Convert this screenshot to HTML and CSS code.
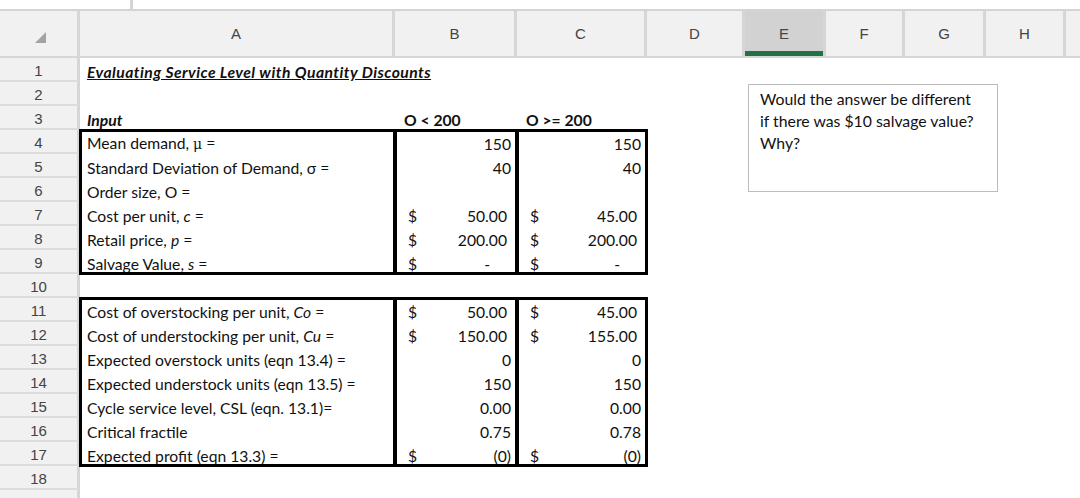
FILE: index.html
```html
<!DOCTYPE html>
<html>
<head>
<meta charset="utf-8">
<link rel="stylesheet" href="styles.css">
</head>
<body>
<div class="topbar"><div class="namebox"></div><div class="formula"></div></div>
<div class="sheet">
  <div class="cells">
    <div class="corner"><svg width="11" height="11" viewBox="0 0 11 11"><polygon points="0,11 11,11 11,0" fill="#a3a3a3"/></svg></div>
    <div class="colh">A</div><div class="colh">B</div><div class="colh">C</div><div class="colh">D</div><div class="colh sel">E</div><div class="colh">F</div><div class="colh">G</div><div class="colh">H</div><div class="colh last"></div>

    <div class="rowh">1</div><div class="c title"><span>Evaluating Service Level with Quantity Discounts</span></div><div class="c"></div><div class="c"></div><div class="rest"></div>
    <div class="rowh">2</div><div class="c"></div><div class="c"></div><div class="c"></div><div class="rest"></div>
    <div class="rowh">3</div><div class="c bi"><span>Input</span></div><div class="c b hd"><span>O &lt; 200</span></div><div class="c b hd"><span>O &gt;= 200</span></div><div class="rest"></div>
    <div class="rowh">4</div><div class="c"><span>Mean demand, <span class="sym">μ</span> =</span></div><div class="c num"><span>150</span></div><div class="c num"><span>150</span></div><div class="rest"></div>
    <div class="rowh">5</div><div class="c"><span>Standard Deviation of Demand, σ =</span></div><div class="c num"><span>40</span></div><div class="c num"><span>40</span></div><div class="rest"></div>
    <div class="rowh">6</div><div class="c"><span>Order size, O =</span></div><div class="c"></div><div class="c"></div><div class="rest"></div>
    <div class="rowh">7</div><div class="c"><span>Cost per unit, <i>c</i> =</span></div><div class="c acc"><span>$</span><span>50.00</span></div><div class="c acc"><span>$</span><span>45.00</span></div><div class="rest"></div>
    <div class="rowh">8</div><div class="c"><span>Retail price, <i>p</i> =</span></div><div class="c acc"><span>$</span><span>200.00</span></div><div class="c acc"><span>$</span><span>200.00</span></div><div class="rest"></div>
    <div class="rowh">9</div><div class="c"><span>Salvage Value, <i>s</i> =</span></div><div class="c acc zero"><span>$</span><span>-</span></div><div class="c acc zero"><span>$</span><span>-</span></div><div class="rest"></div>
    <div class="rowh">10</div><div class="c"></div><div class="c"></div><div class="c"></div><div class="rest"></div>
    <div class="rowh">11</div><div class="c"><span>Cost of overstocking per unit, <i>Co</i> =</span></div><div class="c acc"><span>$</span><span>50.00</span></div><div class="c acc"><span>$</span><span>45.00</span></div><div class="rest"></div>
    <div class="rowh">12</div><div class="c"><span>Cost of understocking per unit, <i>Cu</i> =</span></div><div class="c acc"><span>$</span><span>150.00</span></div><div class="c acc"><span>$</span><span>155.00</span></div><div class="rest"></div>
    <div class="rowh">13</div><div class="c"><span>Expected overstock units (eqn 13.4) =</span></div><div class="c num"><span>0</span></div><div class="c num"><span>0</span></div><div class="rest"></div>
    <div class="rowh">14</div><div class="c"><span>Expected understock units (eqn 13.5) =</span></div><div class="c num"><span>150</span></div><div class="c num"><span>150</span></div><div class="rest"></div>
    <div class="rowh">15</div><div class="c"><span>Cycle service level, CSL (eqn. 13.1)=</span></div><div class="c num"><span>0.00</span></div><div class="c num"><span>0.00</span></div><div class="rest"></div>
    <div class="rowh">16</div><div class="c"><span>Critical fractile</span></div><div class="c num"><span>0.75</span></div><div class="c num"><span>0.78</span></div><div class="rest"></div>
    <div class="rowh">17</div><div class="c"><span>Expected profit (eqn 13.3) =</span></div><div class="c acc neg"><span>$</span><span>(0)</span></div><div class="c acc neg"><span>$</span><span>(0)</span></div><div class="rest"></div>
    <div class="rowh">18</div><div class="c"></div><div class="c"></div><div class="c"></div><div class="rest"></div>
    <div class="rowh"></div><div class="c"></div><div class="c"></div><div class="c"></div><div class="rest"></div>
  </div>
  <div class="overlay">
    <div class="frame t1 ca"></div><div class="frame t1 cb"></div><div class="frame t1 cc"></div>
    <div class="frame t2 ca"></div><div class="frame t2 cb"></div><div class="frame t2 cc"></div>
  </div>
</div>
<div class="textbox">Would the answer be different<br>if there was $10 salvage value?<br>Why?</div>
</body>
</html>
```
FILE: styles.css
```css
html, body {
  margin: 0;
  padding: 0;
  background: #fff;
  width: 1080px;
  height: 498px;
  overflow: hidden;
}
body {
  position: relative;
  font-family: "Lato", "Open Sans", sans-serif;
  color: #111;
}
.topbar {
  height: 9px;
  display: flex;
  border-bottom: 2px solid #d4d4d4;
}
.namebox {
  width: 130px;
  border-right: 3px solid #d4d4d4;
}
.formula { flex: 1; }

.sheet {
  display: grid;
}
.cells, .overlay {
  grid-area: 1 / 1;
  display: grid;
  grid-template-columns: 80px 315px 122px 130px 98px 81px 79px 81px 80px 1fr;
  grid-template-rows: 47px repeat(19, 24px);
}
.overlay { pointer-events: none; }
.rest { grid-column: span 6; }

.corner, .colh {
  background: #f1f1f1;
  border-right: 3px solid #d6d6d6;
  border-bottom: 2px solid #d6d6d6;
  box-sizing: border-box;
  display: flex;
  align-items: center;
  justify-content: center;
  font-family: "Liberation Sans", Arial, sans-serif;
  font-size: 15px;
  color: #444;
}
.corner svg { margin: 8px 0 0 4px; }
.colh.sel {
  background: #d2d2d2;
  box-shadow: inset 0 -5px 0 #217346;
}
.colh.last { border-right: none; }

.rowh {
  background: #f1f1f1;
  border-right: 3px solid #d6d6d6;
  border-bottom: 2px solid #dcdcdc;
  box-sizing: border-box;
  text-align: center;
  font-family: "Liberation Sans", Arial, sans-serif;
  font-size: 15px;
  color: #444;
  line-height: 22px;
  padding-top: 2px;
}

.c {
  display: flex;
  align-items: flex-end;
  font-size: 15.7px;
  line-height: 18px;
  padding-left: 7px;
  padding-bottom: 1px;
  white-space: nowrap;
  overflow: visible;
  box-sizing: border-box;
  min-width: 0;
}
.title {
  font-weight: bold;
  font-style: italic;
  text-decoration: underline;
  letter-spacing: 0.45px;
}
.bi { font-weight: bold; font-style: italic; }
.b { font-weight: bold; }
.hd { padding-left: 9px; }
.sym { font-family: "DejaVu Serif", serif; font-size: 14px; }

.num {
  justify-content: flex-end;
  padding-right: 6px;
}
.acc {
  justify-content: space-between;
  padding-left: 13px;
  padding-right: 10px;
}
.acc.zero { padding-right: 27px; }
.acc.neg { padding-right: 6px; }

.frame {
  border: 3px solid #000;
  margin: -1px;
}
.t1 { grid-row: 5 / 11; }
.t2 { grid-row: 12 / 19; }
.ca { grid-column: 2; }
.cb { grid-column: 3; }
.cc { grid-column: 4; }

.textbox {
  position: absolute;
  left: 748px;
  top: 84px;
  width: 250px;
  height: 108px;
  box-sizing: border-box;
  border: 1px solid #bcbcbc;
  background: #fff;
  padding: 3px 0 0 11px;
  font-size: 15.8px;
  line-height: 22px;
  color: #111;
}
```
